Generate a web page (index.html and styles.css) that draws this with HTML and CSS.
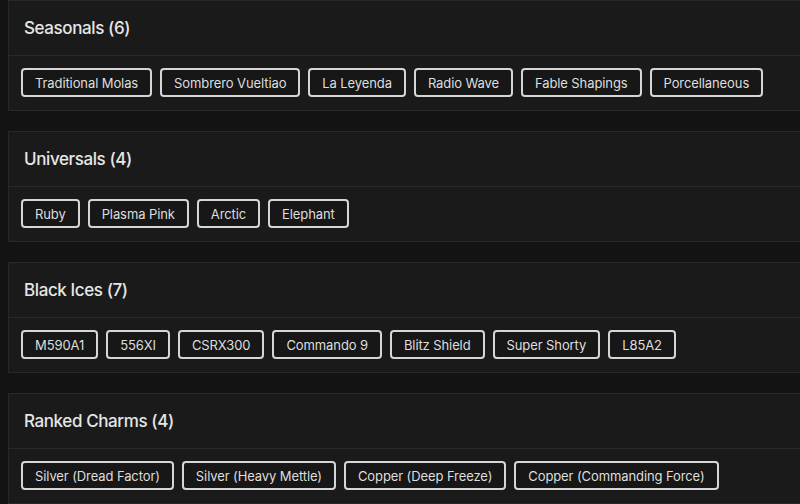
FILE: index.html
```html
<!DOCTYPE html>
<html lang="en">
<head>
    <meta charset="UTF-8">
    <meta name="viewport" content="width=device-width, initial-scale=1.0">
    <title>Collection</title>
    <link rel="stylesheet" href="styles.css">
</head>
<body>
    <main class="groups">
        <section class="group">
            <h2 class="group-title">Seasonals (6)</h2>
            <div class="tags">
                <span class="tag">Traditional Molas</span>
                <span class="tag">Sombrero Vueltiao</span>
                <span class="tag">La Leyenda</span>
                <span class="tag">Radio Wave</span>
                <span class="tag">Fable Shapings</span>
                <span class="tag">Porcellaneous</span>
            </div>
        </section>

        <section class="group">
            <h2 class="group-title">Universals (4)</h2>
            <div class="tags">
                <span class="tag">Ruby</span>
                <span class="tag">Plasma Pink</span>
                <span class="tag">Arctic</span>
                <span class="tag">Elephant</span>
            </div>
        </section>

        <section class="group">
            <h2 class="group-title">Black Ices (7)</h2>
            <div class="tags">
                <span class="tag">M590A1</span>
                <span class="tag">556XI</span>
                <span class="tag">CSRX300</span>
                <span class="tag">Commando 9</span>
                <span class="tag">Blitz Shield</span>
                <span class="tag">Super Shorty</span>
                <span class="tag">L85A2</span>
            </div>
        </section>

        <section class="group">
            <h2 class="group-title">Ranked Charms (4)</h2>
            <div class="tags">
                <span class="tag">Silver (Dread Factor)</span>
                <span class="tag">Silver (Heavy Mettle)</span>
                <span class="tag">Copper (Deep Freeze)</span>
                <span class="tag">Copper (Commanding Force)</span>
            </div>
        </section>
    </main>
</body>
</html>
```

FILE: styles.css
```css
html {
    overflow: hidden;
}
body {
    margin: 0;
    font-family: Inter, "Open Sans", sans-serif;
    background-color: #131313;
    color: #e4e4e4;
}
.groups {
    padding-left: 8px;
    width: 820px;
}
.group {
    margin-bottom: 20px;
    border: 1px solid #282828;
    background-color: #1a1a1a;
}
.group-title {
    margin: 0;
    padding: 16px 15px;
    font-size: 17px;
    font-weight: 500;
    line-height: 22px;
    letter-spacing: -0.4px;
    color: #e6e6e6;
    border-bottom: 1px solid #2a2a2a;
}
.tags {
    display: flex;
    flex-wrap: wrap;
    gap: 8px;
    padding: 12px 12px 13px;
}
.tag {
    padding: 5px 12px 3px;
    font-size: 13px;
    line-height: 17px;
    letter-spacing: -0.1px;
    color: #dedede;
    border: 2px solid #d6d6d6;
    border-radius: 4px;
    background-color: #171717;
}
```
